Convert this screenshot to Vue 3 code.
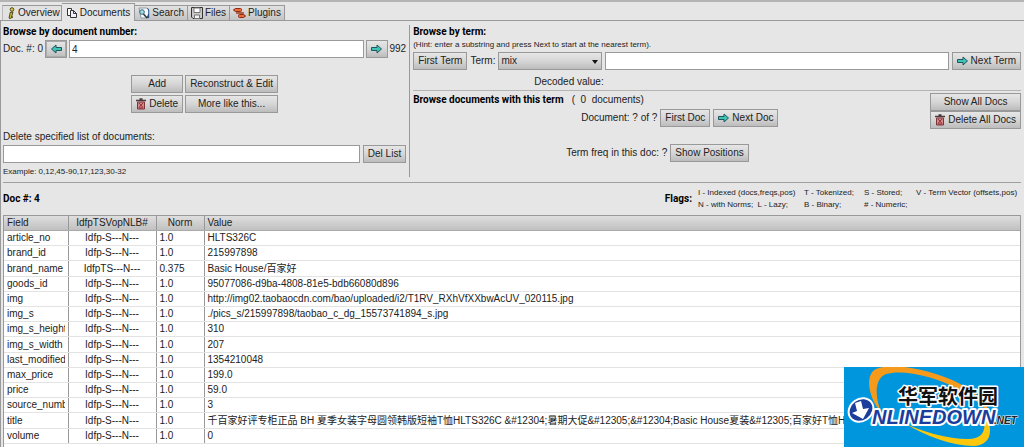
<script setup>
import { ref } from 'vue'

const tabs = ['Overview', 'Documents', 'Search', 'Files', 'Plugins']
const active = ref('Documents')
const docNumber = ref('4')
const deleteList = ref('')
const termField = ref('mix')
const termText = ref('')

const rows = [
  ['article_no', 'Idfp-S---N---', '1.0', 'HLTS326C'],
  ['brand_id', 'Idfp-S---N---', '1.0', '215997898'],
  ['brand_name', 'IdfpTS---N---', '0.375', 'Basic House/百家好'],
  ['goods_id', 'Idfp-S---N---', '1.0', '95077086-d9ba-4808-81e5-bdb66080d896'],
  ['img', 'Idfp-S---N---', '1.0', 'http://img02.taobaocdn.com/bao/uploaded/i2/T1RV_RXhVfXXbwAcUV_020115.jpg'],
  ['img_s', 'Idfp-S---N---', '1.0', './pics_s/215997898/taobao_c_dg_15573741894_s.jpg'],
  ['img_s_height', 'Idfp-S---N---', '1.0', '310'],
  ['img_s_width', 'Idfp-S---N---', '1.0', '207'],
  ['last_modified', 'Idfp-S---N---', '1.0', '1354210048'],
  ['max_price', 'Idfp-S---N---', '1.0', '199.0'],
  ['price', 'Idfp-S---N---', '1.0', '59.0'],
  ['source_number', 'Idfp-S---N---', '1.0', '3'],
  ['title', 'Idfp-S---N---', '1.0', '千百家好评专柜正品 BH 夏季女装字母圆领韩版短袖T恤HLTS326C &#12304;暑期大促&#12305;&#12304;Basic House夏装&#12305;百家好T恤HLTS326C'],
  ['volume', 'Idfp-S---N---', '1.0', '0'],
]
</script>

<template>
  <div class="app">
    <svg class="defs" width="0" height="0" aria-hidden="true">
      <symbol id="arrow" viewBox="0.5 0 11 10">
        <path d="M1 3.5h5.5V1L11 5 6.500 9V6.500H1z" fill="#3fc4b4" stroke="#1d5660" stroke-width="1" />
      </symbol>
      <symbol id="trash" viewBox="0 0 10 12">
        <path d="M0 2.500h10M3.500 1h3" stroke="#4a3a3a" stroke-width="1.500" fill="none" />
        <path d="M1.500 4h7v7h-7z" fill="#d58a8c" stroke="#7d3438" />
        <path d="M3 5l4 4.500M7 5L3 9.500M3 10h4" stroke="#8d2b34" stroke-width="1" />
      </symbol>
    </svg>

    <nav class="tabs" role="tablist">
      <button v-for="t in tabs" :key="t" class="tab" :class="{ on: t === active }" role="tab" :aria-selected="t === active" @click="active = t">
        <svg v-if="t === 'Overview'" width="10" height="12" viewBox="1 0 10 12">
          <circle cx="7" cy="2.500" r="1.800" fill="#d8c93a" stroke="#4e4918" />
          <path d="M5 5.500l3-.5-1.500 5L8 10l-3 1.500L4 11l1-4z" fill="#cfc03a" stroke="#4e4918" />
        </svg>
        <svg v-else-if="t === 'Documents'" width="12" height="12" viewBox="0 0 12 12">
          <path d="M1.500 1.500h4v7h-4z" fill="#fff" stroke="#333" />
          <path d="M4.500 3.500h3l3 3v4h-6z" fill="#eef" stroke="#333" />
          <path d="M7.500 3.500v3h3" fill="none" stroke="#333" />
        </svg>
        <svg v-else-if="t === 'Search'" width="12" height="12" viewBox="0 0 12 12">
          <path d="M1 1h8l2 2v8H3z" fill="#f7f9fc" stroke="#8b98a8" />
          <path d="M9 1c2 3 2 6-1 10h3V2z" fill="#24569c" />
          <circle cx="4" cy="5" r="2.300" fill="#a9dbe6" stroke="#36687a" />
          <path d="M5.500 7l3.500 4" stroke="#333" stroke-width="1.500" />
        </svg>
        <svg v-else-if="t === 'Files'" width="12" height="12" viewBox="0 0 12 12">
          <path d="M.5.500h11v11H2L.5 10z" fill="#c9c9c9" stroke="#333" />
          <path d="M3 1h6v4.500H3z" fill="#fff" stroke="#777" />
          <path d="M3.500 8h5v3.500h-5z" fill="#f3f3f3" stroke="#777" />
        </svg>
        <svg v-else width="13" height="12" viewBox="0 0 13 12">
          <path d="M0 3h4M9 9h4" stroke="#5b2a1a" />
          <rect x="1.500" y="1.500" width="7" height="3" rx="1" fill="#ee6a36" stroke="#8c2d14" />
          <rect x="5.500" y="7.500" width="6" height="3" rx="1" fill="#ee6a36" stroke="#8c2d14" />
          <path d="M3 6h8" stroke="#a33a1c" stroke-width="1.500" />
        </svg>
        <span>{{ t }}</span>
      </button>
    </nav>

    <main class="panel">
      <div class="top">
        <section class="left">
          <h2>Browse by document number:</h2>
          <div class="line doc">
            <label for="docno">Doc. #: 0</label>
            <button class="btn icon back" aria-label="Previous document"><svg class="flip" width="11" height="10"><use href="#arrow" /></svg></button>
            <input id="docno" v-model="docNumber" type="text" />
            <button class="btn icon" aria-label="Next document"><svg width="11" height="10"><use href="#arrow" /></svg></button>
            <span>992</span>
          </div>
          <div class="actions">
            <button class="btn">Add</button>
            <button class="btn">Reconstruct &amp; Edit</button>
            <button class="btn"><svg width="10" height="12"><use href="#trash" /></svg>Delete</button>
            <button class="btn">More like this...</button>
          </div>
          <label class="del-label" for="dellist">Delete specified list of documents:</label>
          <div class="line">
            <input id="dellist" v-model="deleteList" type="text" />
            <button class="btn">Del List</button>
          </div>
          <p class="small example">Example: 0,12,45-90,17,123,30-32</p>
        </section>

        <section class="right">
          <h2>Browse by term:</h2>
          <p class="small hint">(Hint: enter a substring and press Next to start at the nearest term).</p>
          <div class="line term">
            <button class="btn">First Term</button>
            <label for="field">Term:</label>
            <span class="pick">
              <select id="field" v-model="termField"><option>mix</option></select>
            </span>
            <input v-model="termText" type="text" aria-label="Term text" />
            <button class="btn next"><svg width="11" height="10"><use href="#arrow" /></svg>Next Term</button>
          </div>
          <p class="decoded">Decoded value:</p>
          <div class="with-term">
            <div class="term-docs">
              <div class="found"><h2>Browse documents with this term</h2><span>(&nbsp; 0 &nbsp;documents)</span></div>
              <div class="line docs">
                <span>Document: ? of ?</span>
                <button class="btn">First Doc</button>
                <button class="btn"><svg width="11" height="10"><use href="#arrow" /></svg>Next Doc</button>
              </div>
              <div class="line freq">
                <span>Term freq in this doc: ?</span>
                <button class="btn">Show Positions</button>
              </div>
            </div>
            <div class="all">
              <button class="btn">Show All Docs</button>
              <button class="btn"><svg width="10" height="12"><use href="#trash" /></svg>Delete All Docs</button>
            </div>
          </div>
        </section>
      </div>

      <div class="summary">
        <h2>Doc #: 4</h2>
        <h2 class="flags-title">Flags:</h2>
        <div class="flags small">
          <span>I - Indexed (docs,freqs,pos)</span><span>T - Tokenized;</span><span>S - Stored;</span><span>V - Term Vector (offsets,pos)</span>
          <span>N - with Norms; &nbsp;L - Lazy;</span><span>B - Binary;</span><span class="wide"># - Numeric;</span>
        </div>
      </div>

      <div class="grid">
        <table>
          <colgroup><col class="c1" /><col class="c2" /><col class="c3" /><col /></colgroup>
          <thead>
            <tr><th>Field</th><th class="mid">IdfpTSVopNLB#</th><th class="mid">Norm</th><th>Value</th></tr>
          </thead>
          <tbody>
            <tr v-for="r in rows" :key="r[0]">
              <td><div class="clip">{{ r[0] }}</div></td>
              <td class="mid">{{ r[1] }}</td>
              <td>{{ r[2] }}</td>
              <td>{{ r[3] }}</td>
            </tr>
          </tbody>
        </table>
      </div>
    </main>

    <svg class="logo" width="180" height="80" viewBox="0 0 180 80" role="img" aria-label="Onlinedown.net">
      <rect width="180" height="80" fill="#0096de" />
      <path d="M37 45C25 32 20 8 32 2C52-6 96 5 122 20C136 29 145 40 149 52C140 39 130 31 116 23C92 9 58 2 42 7C30 12 31 30 37 45Z" fill="#f59a1b" />
      <path d="M62 57C82 69 108 79 130 79C145 78 149 67 144 53L140 54C142 65 137 72 124 72C103 72 80 65 62 57Z" fill="#fdc70c" />
      <g stroke-linejoin="round" paint-order="stroke" stroke="#fff">
        <text class="en" x="28" y="57" stroke-width="4">NLINEDOWN</text>
        <text class="cn" x="54" y="37" stroke-width="3">华军软件园</text>
        <text class="net" x="150" y="57" stroke-width="1">.NET</text>
      </g>
      <ellipse cx="17" cy="43" rx="13" ry="11" transform="rotate(-35 17 43)" fill="#1b3d9b" stroke="#fff" stroke-width="2" />
      <path d="M11 36L17 34L19 42L25 41L19 52L8 46L13 44Z" fill="#fff" />
    </svg>
  </div>
</template>

<style>
body { margin: 0; background: #e6e6e6; }
</style>

<style scoped>
.app {
  position: relative;
  display: flex;
  flex-direction: column;
  min-height: 100vh;
  box-sizing: border-box;
  border-top: 2px solid #b4b4b4;
  background: #e6e6e6;
  color: #222;
  font: 10px/12px "Liberation Sans", "Noto Sans CJK SC", sans-serif;
}
.defs { position: absolute; }
h2, p { margin: 0; }
h2 { font: bold 10px/12px Roboto, "Liberation Sans", sans-serif; color: #000; }
button, input, select { font: inherit; color: inherit; box-sizing: border-box; margin: 0; border-radius: 0; }
.small { font-size: 8px; line-height: 12px; }

.tabs { display: flex; align-items: flex-end; height: 19px; padding-left: 2px; border-bottom: 1px solid #999; box-sizing: border-box; }
.tab {
  display: flex; align-items: center; gap: 2px; height: 15px; padding: 0 3px;
  border: 1px solid #999; border-left: 0; border-bottom: 0;
  background: linear-gradient(#e2e2e2, #c4c4c4); white-space: nowrap;
}
.tab:first-child { padding: 0 1px 0 3px; border-left: 1px solid #bbb; background: #e2e2e2; }
.tab.on { height: 18px; padding: 0 4px; margin-bottom: -1px; background: #e6e6e6; }

.panel { display: flex; flex-direction: column; flex: 1; border-left: 1px solid #999; padding: 4px 3px 0 2px; }
.top { display: flex; padding-bottom: 5px; border-bottom: 1px solid #a0a0a0; }
.left { flex: 0 0 40%; box-sizing: border-box; min-width: 0; padding-right: 3px; border-right: 1px solid #999; }
.right { flex: 1; min-width: 0; padding-left: 3px; }
.left > h2, .right > h2 { padding-top: 1px; }
.line { display: flex; align-items: center; gap: 3px; }
.left .line { margin-top: 2px; }
.line.doc { gap: 2px; }
.line input { flex: 1; min-width: 0; height: 18px; padding: 0 2px; border: 1px solid #999; background: #fff; }

.btn {
  display: flex; align-items: center; justify-content: center; gap: 3px; height: 18px; padding: 0 4px;
  border: 1px solid #999; background: linear-gradient(#e6e6e6, #d6d6d6 50%, #bcbcbc); white-space: nowrap;
}
.icon { width: 22px; padding: 0; }
.back { box-shadow: inset 0 0 0 1px #aaa; }
.flip { transform: scaleX(-1); }

.actions { display: grid; grid-template-columns: auto auto; justify-content: center; gap: 2px; margin-top: 17px; }
.del-label { display: block; margin-top: 18px; }
.example { margin-top: 3px; margin-bottom: -1px; }

.hint { margin-top: 1px; }
.term { margin-top: 1px; }
.pick { position: relative; width: 104px; }
.pick::after {
  content: ""; position: absolute; right: 4px; top: 8px; pointer-events: none;
  border: 3px solid transparent; border-top: 4px solid #111; border-bottom: 0;
}
select { appearance: none; display: block; width: 100%; height: 18px; padding: 0 2px; border: 1px solid #999; background: linear-gradient(#e6e6e6, #d6d6d6 50%, #bcbcbc); }
.decoded { margin-top: 6px; padding-left: 121px; }
.with-term { display: flex; margin-top: 2px; padding-top: 2px; border-top: 1px solid #b4b4b4; }
.term-docs { flex: 1; }
.found { display: flex; gap: 8px; padding-top: 1px; }
.docs { margin-top: 3px; padding-left: 168px; }
.freq { margin-top: 17px; padding-left: 153px; }
.all { display: flex; flex-direction: column; }

.summary { display: flex; align-items: center; margin: 4px 0; }
.flags-title { margin-left: auto; }
.flags { display: grid; grid-template-columns: 106px 60px 52px 105px; margin-left: 6px; white-space: nowrap; }
.wide { grid-column: span 2; }

.grid { flex: 1; background: #fff; border: 1px solid #999; border-bottom: 0; }
table { width: 100%; height: 228px; table-layout: fixed; border-collapse: collapse; }
.c1 { width: 64px; }
.c2 { width: 88px; }
.c3 { width: 48px; }
th, td { padding: 0 3px; line-height: 12px; text-align: left; font-weight: normal; white-space: nowrap; overflow: hidden; border-right: 1px solid #999; }
td { border-bottom: 1px solid #e3e3e3; }
th { height: 14px; border-bottom: 1px solid #aaa; background: linear-gradient(#dedede, #c0c0c0); }
th:last-child, td:last-child { border-right: 0; }
.mid { text-align: center; }
.clip { overflow: hidden; }

.logo { position: absolute; right: 0; bottom: 0; }
.cn { font: bold 20px "Noto Sans CJK SC", sans-serif; fill: #111; }
.en { font: italic bold 20px "Liberation Sans", sans-serif; fill: #1b3d9b; }
.net { font: italic bold 10px "Liberation Sans", sans-serif; fill: #222; }
</style>
